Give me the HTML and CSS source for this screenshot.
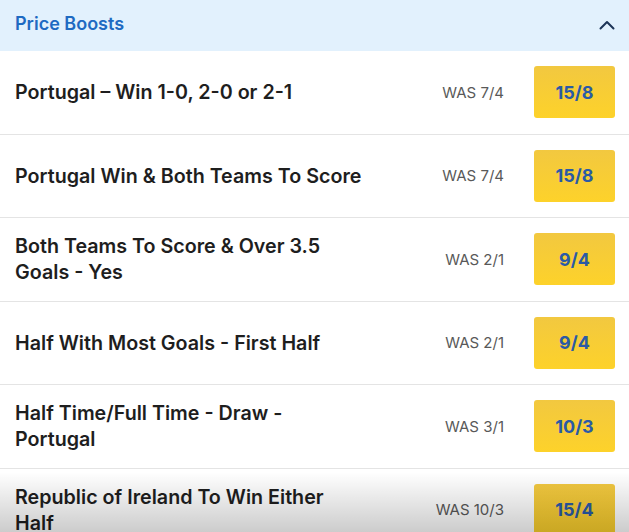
FILE: index.html
```
<!DOCTYPE html>
<html lang="en">
<head>
<meta charset="utf-8">
<title>Price Boosts</title>
<link rel="stylesheet" href="styles.css">
</head>
<body>
<section class="panel">
  <header class="panel-head">
    <h2 class="panel-title">Price Boosts</h2>
    <svg class="chevron" width="16" height="10" viewBox="0 0 16 10" aria-hidden="true"><path d="M1.5 8.5 L8 2 L14.5 8.5" fill="none" stroke="#1d3557" stroke-width="2" stroke-linecap="round" stroke-linejoin="round"/></svg>
  </header>
  <ul class="boosts">
    <li class="boost"><span class="boost-name">Portugal – Win 1-0, 2-0 or 2-1</span><span class="was">WAS 7/4</span><button class="price">15/8</button></li>
    <li class="boost"><span class="boost-name">Portugal Win &amp; Both Teams To Score</span><span class="was">WAS 7/4</span><button class="price">15/8</button></li>
    <li class="boost"><span class="boost-name">Both Teams To Score &amp; Over 3.5<br>Goals - Yes</span><span class="was">WAS 2/1</span><button class="price">9/4</button></li>
    <li class="boost"><span class="boost-name">Half With Most Goals - First Half</span><span class="was">WAS 2/1</span><button class="price">9/4</button></li>
    <li class="boost"><span class="boost-name">Half Time/Full Time - Draw -<br>Portugal</span><span class="was">WAS 3/1</span><button class="price">10/3</button></li>
    <li class="boost"><span class="boost-name">Republic of Ireland To Win Either<br>Half</span><span class="was">WAS 10/3</span><button class="price">15/4</button></li>
  </ul>
  <div class="fade"></div>
</section>
</body>
</html>
```
FILE: styles.css
```
* { box-sizing: border-box; }
html, body { margin: 0; padding: 0; background: #fff; }
body { font-family: Inter, "Noto Sans", sans-serif; overflow: hidden; height: 532px; }
.panel { position: relative; height: 532px; overflow: hidden; }
.panel-head {
  height: 51px;
  background: #e2f1fd;
  display: flex;
  align-items: center;
  justify-content: space-between;
  padding: 0 14px 0 15px;
}
.panel-title {
  margin: 0;
  font-size: 18px;
  font-weight: 600;
  color: #1e6ac2;
  padding-bottom: 4px;
}
.chevron { margin-bottom: 2px; }
.boosts { list-style: none; margin: 0; padding: 0; }
.boost {
  height: 83.5px;
  display: flex;
  align-items: center;
  padding: 0 14px 0 15px;
  border-bottom: 1px solid #e4e4e4;
}
.boost-name {
  flex: 0 1 auto;
  white-space: nowrap;
  font-size: 19.7px;
  font-weight: 600;
  line-height: 26px;
  color: #1e1e1e;
}
.was {
  margin-left: auto;
  font-size: 15px;
  color: #595959;
  margin-right: 30px;
  white-space: nowrap;
}
.price {
  width: 81px;
  height: 52px;
  border: none;
  border-radius: 3px;
  background: linear-gradient(#f2c840, #fdd22a);
  color: #2a5aa6;
  font-family: inherit;
  font-size: 18px;
  font-weight: 700;
  flex-shrink: 0;
}
.fade {
  position: absolute;
  left: 0; right: 0; bottom: 0;
  height: 60px;
  background: linear-gradient(rgba(0,0,0,0), rgba(0,0,0,0.2));
  pointer-events: none;
}
```
